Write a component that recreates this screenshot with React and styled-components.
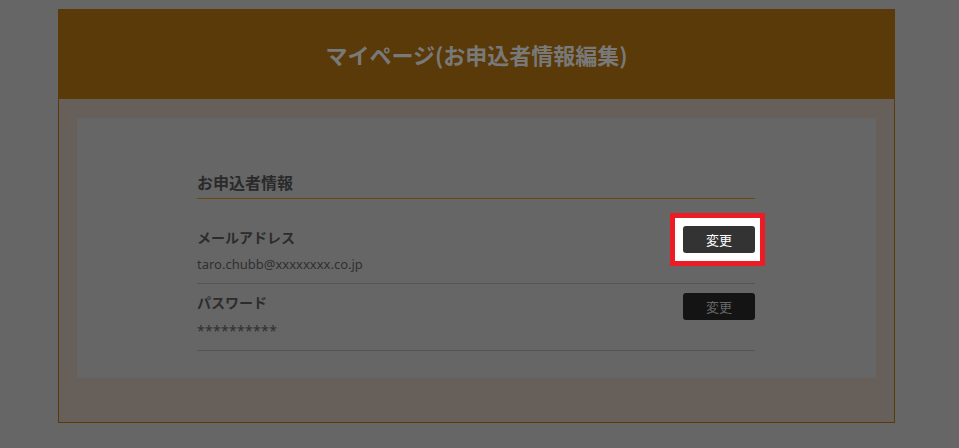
import React from "react";
import styled, { createGlobalStyle } from "styled-components";

const GlobalStyle = createGlobalStyle`
  html, body {
    margin: 0;
    padding: 0;
    background: #666666;
  }
  body {
    font-family: "Noto Sans", "Noto Sans CJK JP", sans-serif;
  }
`;

const Page = styled.div`
  padding: 9px 0 0 58px;
  min-height: 448px;
  box-sizing: border-box;
`;

const Card = styled.section`
  width: 837px;
  box-sizing: border-box;
  border: 1px solid #5a3a08;
  border-top: none;
  background: #675f59;
`;

const Header = styled.header`
  height: 90px;
  background: #5a3a08;
  display: flex;
  align-items: center;
  justify-content: center;
`;

const Title = styled.h1`
  margin: 0;
  font-family: "Noto Sans CJK JP", sans-serif;
  font-size: 22px;
  font-weight: 700;
  color: #797979;
  letter-spacing: 0;
`;

const Body = styled.div`
  padding: 19px 18px 44px 18px;
`;

const Panel = styled.div`
  background: #666666;
  padding: 52px 121px 27px 120px;
`;

const SectionTitle = styled.h2`
  margin: 0;
  font-family: "Noto Sans CJK JP", sans-serif;
  font-size: 16px;
  line-height: 24px;
  font-weight: 700;
  color: #2a2a2a;
  padding-bottom: 4px;
  border-bottom: 1px solid #6b4510;
`;

const List = styled.div`
  margin-top: 20px;
  display: flex;
  flex-direction: column;
`;

const Row = styled.div`
  display: flex;
  justify-content: space-between;
  align-items: flex-start;
  padding: 8px 0 ${(p) => p.$pb}px;
  border-bottom: 1px solid #555555;
`;

const Info = styled.div`
  display: flex;
  flex-direction: column;
  gap: 8px;
`;

const Label = styled.div`
  font-family: "Noto Sans CJK JP", sans-serif;
  font-size: 14px;
  line-height: 20px;
  font-weight: 700;
  color: #2c2c2c;
`;

const Value = styled.div`
  font-size: 13px;
  line-height: 18px;
  color: #303030;
`;

const Secret = styled(Value)`
  font-size: 14px;
  letter-spacing: 0.3px;
  padding-top: 2px;
`;

const Highlight = styled.span`
  position: relative;
  display: inline-flex;
  &::before {
    content: "";
    position: absolute;
    left: -13px;
    right: -10px;
    top: -14px;
    bottom: -13px;
    background: #ffffff;
    border: 5px solid #ed1c24;
  }
`;

const Button = styled.button`
  position: relative;
  width: 72px;
  height: 27px;
  margin-top: ${(p) => (p.$active ? -1 : 1)}px;
  border: none;
  border-radius: 3px;
  background: ${(p) => (p.$active ? "#333333" : "#141414")};
  color: ${(p) => (p.$active ? "#ffffff" : "#666666")};
  font-family: "Noto Sans CJK JP", sans-serif;
  font-size: 13px;
  padding: 0;
  cursor: pointer;
`;

export default function App() {
  return (
    <>
      <GlobalStyle />
      <Page>
        <Card>
          <Header>
            <Title>マイページ(お申込者情報編集)</Title>
          </Header>
          <Body>
            <Panel>
              <SectionTitle>お申込者情報</SectionTitle>
              <List>
                <Row $pb={10}>
                  <Info>
                    <Label>メールアドレス</Label>
                    <Value>taro.chubb@xxxxxxxx.co.jp</Value>
                  </Info>
                  <Highlight>
                    <Button $active>変更</Button>
                  </Highlight>
                </Row>
                <Row $pb={10}>
                  <Info>
                    <Label>パスワード</Label>
                    <Secret>**********</Secret>
                  </Info>
                  <Button>変更</Button>
                </Row>
              </List>
            </Panel>
          </Body>
        </Card>
      </Page>
    </>
  );
}
